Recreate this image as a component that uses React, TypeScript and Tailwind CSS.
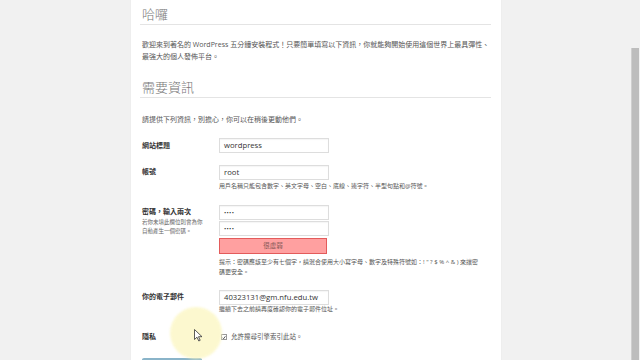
import React from "react";

const FONT = { fontFamily: '"Open Sans","Noto Sans CJK TC",sans-serif' };

function Input({ value, dots }: { value: string; dots?: boolean }) {
  return (
    <div className="h-[15px] w-[110px] border border-[#dddddd] bg-white flex items-center pl-[4px] text-[7.7px] text-[#333] leading-none shadow-[inset_0_1px_1px_rgba(0,0,0,0.04)]">
      <span className={dots ? "text-[6px] tracking-[0.3px]" : ""}>{value}</span>
    </div>
  );
}

export default function App() {
  return (
    <div className="relative w-[640px] h-[360px] overflow-hidden bg-[#f1f1f1]" style={FONT}>
      <div className="flex h-full">
        <div className="ml-[131px] w-[370px] h-full bg-white shadow-[0_0_1px_rgba(0,0,0,0.08)] pl-[9px] pr-[10px]">
          <div className="pt-[6px] pb-[2px] border-b border-[#e4e4e4] pl-[2px]">
            <div className="text-[13px] leading-[16px] text-[#777] font-light">哈囉</div>
          </div>
          <div className="mt-[14px] pl-[2px] text-[7px] leading-[12px] text-[#555] whitespace-nowrap">
            <div>歡迎來到著名的 WordPress 五分鐘安裝程式！只要簡單填寫以下資訊，你就能夠開始使用這個世界上最具彈性、</div>
            <div>最強大的個人發佈平台。</div>
          </div>
          <div className="mt-[16px] pb-[2px] border-b border-[#e4e4e4] pl-[2px]">
            <div className="text-[13px] leading-[16px] text-[#777] font-light">需要資訊</div>
          </div>
          <div className="mt-[16px] pl-[2px] text-[7px] leading-[12px] text-[#555]">
            請提供下列資訊，別擔心，你可以在稍後更動他們。
          </div>

          <div className="mt-[12px] flex">
            <div className="w-[79px] pl-[2px] pt-[3px] text-[7px] leading-[10px] font-semibold text-[#333]">網站標題</div>
            <Input value="wordpress" />
          </div>

          <div className="mt-[12px] flex">
            <div className="w-[79px] pl-[2px] pt-[2px] text-[7px] leading-[10px] font-semibold text-[#333]">帳號</div>
            <div>
              <Input value="root" />
              <div className="mt-[1px] text-[6px] leading-[10px] text-[#555] whitespace-nowrap">
                用戶名稱只能包含數字、英文字母、空白、底線、連字符、半型句點和@符號。
              </div>
            </div>
          </div>

          <div className="mt-[14px] flex">
            <div className="w-[79px] pl-[2px] pt-[2px]">
              <div className="text-[7px] leading-[10px] font-semibold text-[#333]">密碼，輸入兩次</div>
              <div className="mt-[1px] text-[5.5px] leading-[9px] text-[#666]">
                <div>若你未填此欄位則會為你</div>
                <div>自動產生一個密碼。</div>
              </div>
            </div>
            <div>
              <Input value="••••" dots />
              <div className="mt-[1px]">
                <Input value="••••" dots />
              </div>
              <div className="mt-[2px] w-[108px] h-[16px] bg-[#ffa0a0] border border-[#e35b5b] flex items-center justify-center text-[6.5px] text-[#8a5a5a]">
                很虛弱
              </div>
              <div className="mt-[3px] text-[6px] leading-[10px] text-[#555] whitespace-nowrap">
                <div>提示：密碼應該至少有七個字，請混合使用大小寫字母、數字及特殊符號如：! &quot; ? $ % ^ &amp; ) 來讓密</div>
                <div>碼更安全。</div>
              </div>
            </div>
          </div>

          <div className="mt-[13px] flex">
            <div className="w-[79px] pl-[2px] pt-[2px] text-[7px] leading-[10px] font-semibold text-[#333]">你的電子郵件</div>
            <div>
              <Input value="40323131@gm.nfu.edu.tw" />
              <div className="text-[6px] leading-[9px] text-[#555] whitespace-nowrap">
                繼續下去之前請再度確認你的電子郵件位址。
              </div>
            </div>
          </div>

          <div className="mt-[18px] flex items-center">
            <div className="w-[79px] pl-[2px] text-[7px] leading-[10px] font-semibold text-[#333]">隱私</div>
            <div className="flex items-center gap-[4px] pl-[2px]">
              <div className="w-[6px] h-[6px] border border-[#999] bg-white flex items-center justify-center">
                <svg width="5" height="5" viewBox="0 0 10 10">
                  <path d="M1.5 5.5 L4 8 L8.5 2" stroke="#333" strokeWidth="2" fill="none" />
                </svg>
              </div>
              <span className="text-[6.5px] leading-[10px] text-[#555]">允許搜尋引擎索引此站。</span>
            </div>
          </div>

          <div className="mt-[16px] ml-[2px] w-[60px] h-[14px] bg-[#5ea9cc] border-t-2 border-[#8ab4c9] rounded-[2px]"></div>
        </div>
        <div className="flex-1" />
        <div className="w-[8px] mr-[1px] pt-[48px] h-full">
          <div className="h-full w-full bg-[#bdbdbd] border-l border-[#cfcfcf]"></div>
        </div>
      </div>

      <div className="absolute left-[170px] top-[307px] w-[52px] h-[52px] rounded-full bg-[#fcf7c4] opacity-80 blur-[1px]"></div>
      <svg className="absolute left-[194px] top-[329px]" width="9" height="13" viewBox="0 0 9 13">
        <path d="M0.5 0.5 L0.5 10.5 L3 8.2 L4.8 12 L6.2 11.3 L4.5 7.7 L8 7.7 Z" fill="white" stroke="#333" strokeWidth="0.8" />
      </svg>
    </div>
  );
}
